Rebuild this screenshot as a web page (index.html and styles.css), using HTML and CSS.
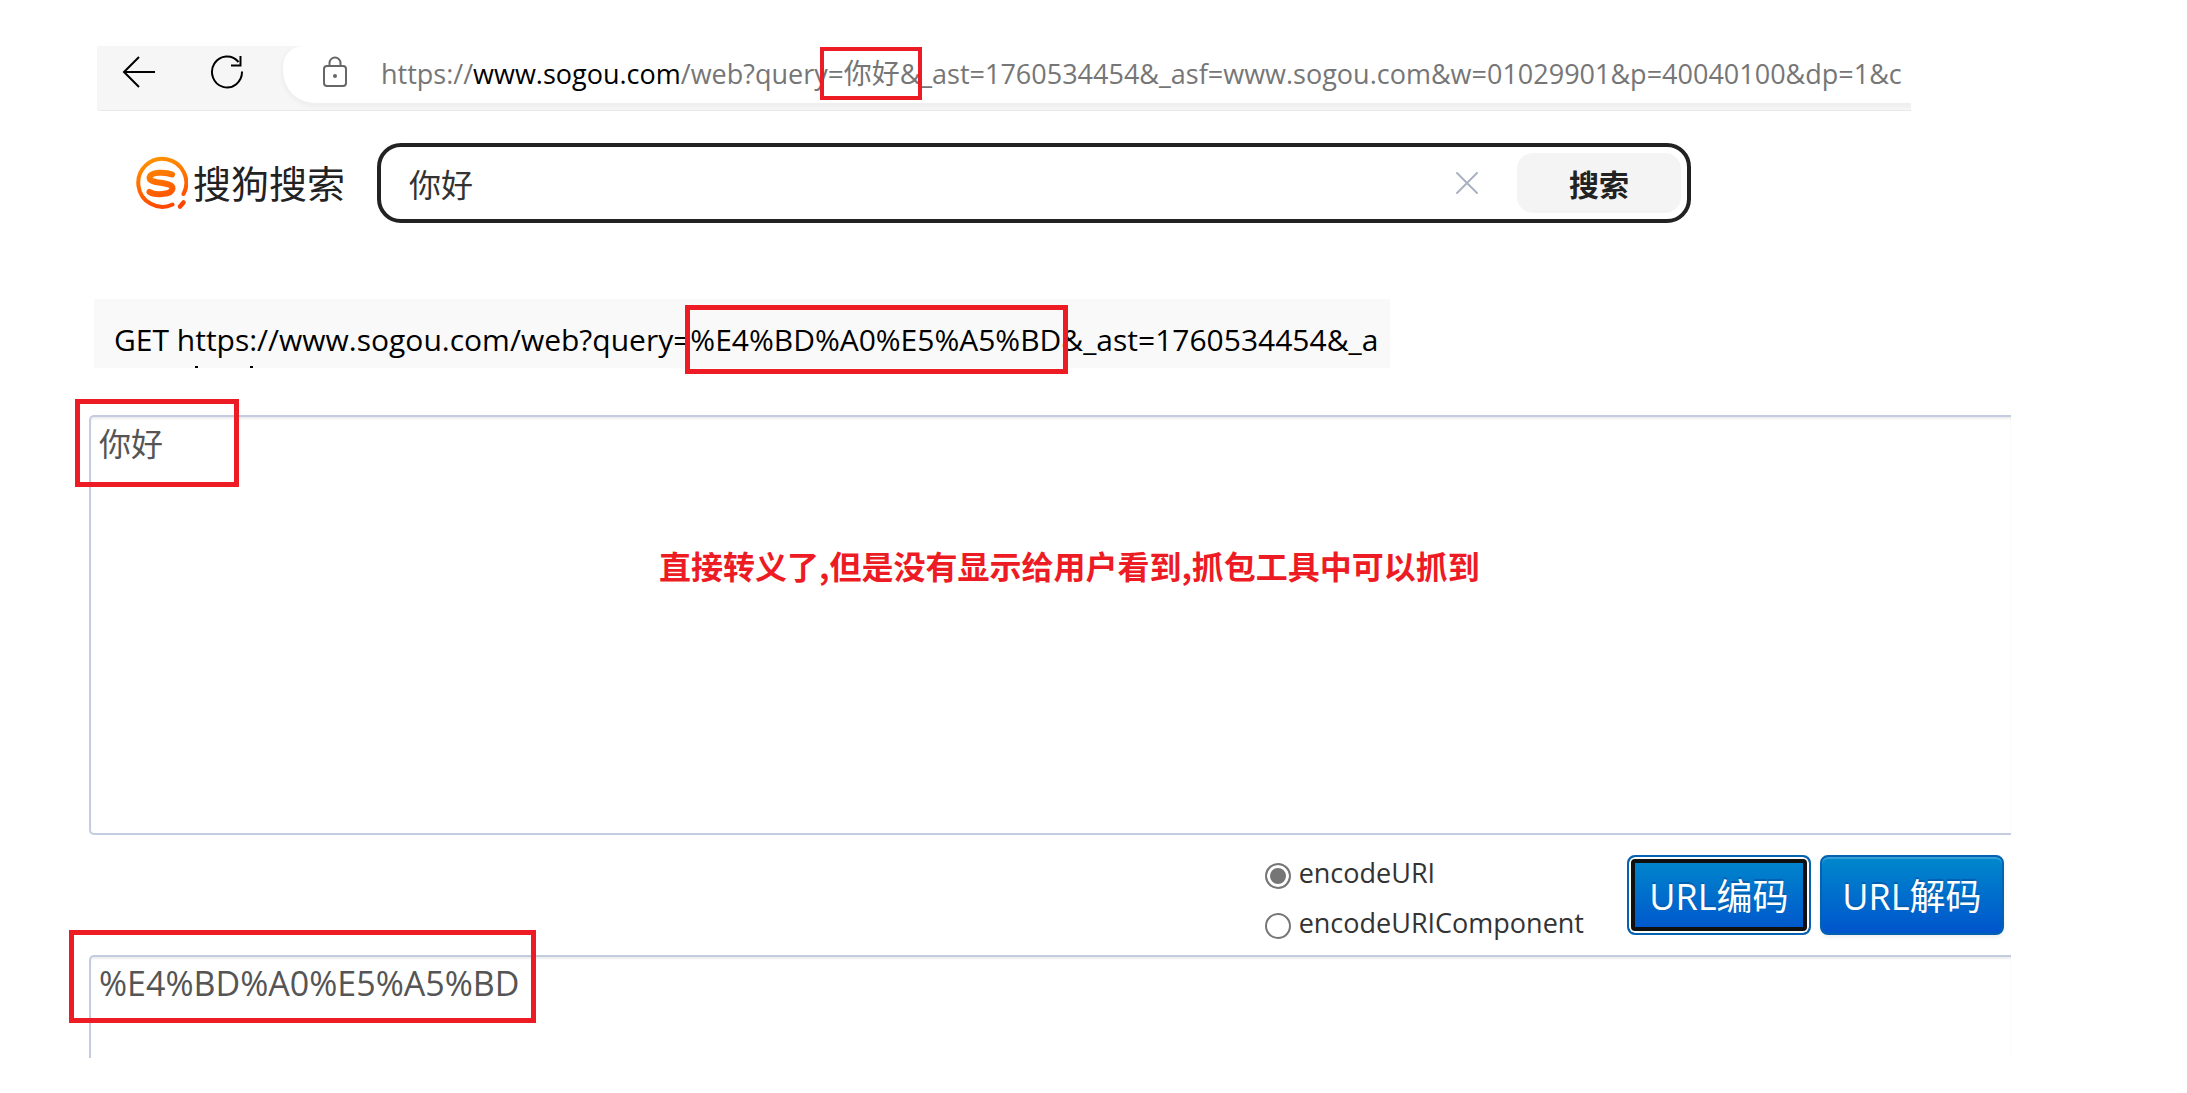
FILE: index.html
```
<!DOCTYPE html>
<html lang="zh-CN">
<head>
    <meta charset="UTF-8">
    <meta name="viewport" content="width=device-width, initial-scale=1.0">
    <title>URL编码</title>
    <link rel="stylesheet" href="styles.css">
</head>
<body>
    <!-- Browser toolbar -->
    <div class="toolbar">
        <div class="nav-buttons">
            <button type="button" class="icon-btn" aria-label="返回">
                <svg width="34" height="34" viewBox="0 0 34 34" fill="none" stroke="#000" stroke-width="2">
                    <path d="M33 17H2M17 2L2 17l15 15"/>
                </svg>
            </button>
            <button type="button" class="icon-btn" aria-label="刷新">
                <svg width="34" height="34" viewBox="0 0 34 34" fill="none" stroke="#000" stroke-width="2">
                    <path d="M32 16.5a15 15.500 0 1 1-3.500-9.500M30.500 1v9.500H21"/>
                </svg>
            </button>
        </div>
        <div class="address">
            <svg class="lock" width="26" height="32" viewBox="0 0 26 32" fill="none" stroke="#666" stroke-width="2">
                <rect x="2" y="10" width="22" height="20" rx="3"/>
                <path d="M7.500 10V7a5.500 5.500 0 0 1 11 0v3"/>
                <circle cx="13" cy="20" r="2" fill="#666" stroke="none"/>
            </svg>
            <div class="url">https://<span class="host">www.sogou.com</span>/web?query<span class="mark mark-url">=你好&amp;</span>_ast=1760534454&amp;_asf=www.sogou.com&amp;w=01029901&amp;p=40040100&amp;dp=1&amp;c</div>
        </div>
    </div>

    <!-- Search bar -->
    <div class="search">
        <a href="#" class="logo">
            <svg width="54" height="54" viewBox="0 0 54 54" fill="none" stroke="url(#flame)" stroke-linecap="round">
                <defs>
                    <linearGradient id="flame" gradientUnits="userSpaceOnUse" x1="20" y1="0" x2="34" y2="54">
                        <stop offset="0" stop-color="#ff9500"/>
                        <stop offset="1" stop-color="#ff4200"/>
                    </linearGradient>
                </defs>
                <path stroke-width="4" d="M38.500 48.500A24 24 0 1 1 49.500 38"/>
                <path stroke-width="4.500" d="M46 50.500l3.500-4"/>
                <path stroke-width="6" d="M38 18.500C32 16 16.500 15.500 15.500 21.500C15 28.500 39 25 38.500 32.500C37.500 39.500 20 39 15.500 36"/>
            </svg>
            <span>搜狗搜索</span>
        </a>
        <form class="search-form">
            <input type="text" value="你好" aria-label="搜索内容">
            <button type="button" class="clear-btn" aria-label="清除">
                <svg width="24" height="24" viewBox="0 0 24 24" fill="none" stroke="#aab2c2" stroke-width="2" stroke-linecap="round">
                    <path d="M2 2l20 20M22 2L2 22"/>
                </svg>
            </button>
            <button type="submit" class="search-btn">搜索</button>
        </form>
    </div>

    <!-- Captured request -->
    <div class="request">
        <div class="request-line">GET https://www.sogou.com/web?query=<span class="mark mark-request">%E4%BD%A0%E5%A5%BD</span>&amp;_ast=1760534454&amp;_a</div>
        <svg class="next-line" width="58" height="2" viewBox="0 0 58 2" fill="#000">
            <path d="M0 0h3v2H0zM55 0h3v2h-3z"/>
        </svg>
    </div>

    <!-- URL encode / decode tool -->
    <div class="tool">
        <div class="field">
            <textarea rows="9" aria-label="输入">你好</textarea>
            <div class="box box-input"></div>
            <p class="note">直接转义了,但是没有显示给用户看到,抓包工具中可以抓到</p>
        </div>
        <div class="controls">
            <div class="radios">
                <label><input type="radio" name="mode" checked><span>encodeURI</span></label>
                <label><input type="radio" name="mode"><span>encodeURIComponent</span></label>
            </div>
            <button type="button" class="btn active">URL编码</button>
            <button type="button" class="btn">URL解码</button>
        </div>
        <div class="field">
            <textarea class="output" rows="2" aria-label="输出">%E4%BD%A0%E5%A5%BD</textarea>
            <div class="box box-output"></div>
        </div>
    </div>
</body>
</html>
```
FILE: styles.css
```
* {
    box-sizing: border-box;
}
body {
    margin: 0;
    padding-top: 46px;
    background: #fff;
    color: #000;
    font-family: "Open Sans", "Noto Sans CJK SC", sans-serif;
}
button, input, textarea {
    font-family: inherit;
}

/* Browser toolbar */
.toolbar {
    display: flex;
    height: 65px;
    margin: 0 276px 0 97px;
    background: #f6f6f6;
    border-bottom: 1px solid #e8e8e8;
    border-bottom-left-radius: 4px;
    overflow: hidden;
}
.nav-buttons {
    display: flex;
    flex: none;
    gap: 54px;
    padding: 9px 39px 0 25px;
}
.icon-btn, .clear-btn {
    padding: 0;
    border: none;
    background: none;
    line-height: 0;
    cursor: pointer;
}
.icon-btn {
    height: 34px;
}
.address {
    display: flex;
    flex: 1;
    min-width: 0;
    height: 57px;
    padding-left: 39px;
    background: #fff;
    border-radius: 20px 0 0 32px;
    box-shadow: 0 2px 3px 2px #efefef;
}
.lock {
    flex: none;
    margin: 10px 33px 0 0;
}
.url {
    color: #767676;
    font-size: 27px;
    line-height: 54px;
    white-space: nowrap;
}
.host {
    color: #000;
}

/* Red frames */
.mark {
    position: relative;
}
.mark::after, .box {
    content: "";
    position: absolute;
    border: 5px solid #ed1c24;
    pointer-events: none;
}
.mark-url {
    font-size: 28px;
}
.mark-url::after {
    inset: -7px -2px -8px -8px;
    border-width: 4px;
}
.mark-request::after {
    inset: -14px -7px -14px -5px;
}

/* Search bar */
.search {
    display: flex;
    align-items: center;
    gap: 32px;
    margin: 32px 496px 0 134px;
}
.logo {
    display: flex;
    flex: none;
    align-items: center;
    gap: 5px;
    color: #222;
    font-size: 38px;
    line-height: 54px;
    text-decoration: none;
}
.search-form {
    display: flex;
    flex: 1;
    align-items: center;
    height: 80px;
    padding: 6px;
    border: 4px solid #222;
    border-radius: 24px;
}
.search-form input {
    flex: 1;
    min-width: 0;
    padding: 0 0 0 22px;
    border: none;
    outline: none;
    color: #333;
    font-size: 32px;
}
.clear-btn {
    margin-right: 38px;
}
.search-btn {
    width: 164px;
    height: 60px;
    border: none;
    border-radius: 16px;
    background: #f4f4f4;
    color: #222;
    font-size: 30px;
    font-weight: bold;
}

/* Captured request */
.request {
    height: 69px;
    margin: 76px 797px 0 94px;
    padding-left: 20px;
    background: #f9f9f9;
}
.request-line {
    height: 67px;
    padding-top: 20px;
    font-size: 30px;
    line-height: 42px;
    white-space: nowrap;
}
.next-line {
    display: block;
    margin-left: 81px;
}

/* URL tool */
.tool {
    margin: 47px 176px 0 89px;
}
.field {
    position: relative;
}
textarea {
    display: block;
    width: 100%;
    padding: 4px 8px 7px;
    border: 2px solid #c3cddf;
    border-right: none;
    border-radius: 5px 0 0 5px;
    outline: none;
    box-shadow: inset 0 2px 2px #eee;
    color: #555;
    font-size: 32px;
    line-height: 45px;
    resize: none;
    overflow: hidden;
}
.output {
    border-bottom: none;
    border-radius: 5px 0 0 0;
    font-size: 34px;
}
.box-input {
    top: -16px;
    left: -14px;
    width: 164px;
    height: 88px;
}
.box-output {
    top: -25px;
    left: -20px;
    width: 467px;
    height: 93px;
}
.note {
    position: absolute;
    top: 126px;
    left: 570px;
    margin: 0;
    color: #ed1c24;
    font-family: "Noto Sans CJK SC", sans-serif;
    font-size: 32px;
    font-weight: bold;
    line-height: 48px;
    white-space: nowrap;
}
.controls {
    display: flex;
    justify-content: flex-end;
    gap: 9px;
    height: 120px;
    padding: 16px 7px 0 0;
}
.radios {
    margin-right: 34px;
    color: #333;
    font-size: 27px;
    line-height: 44px;
}
.radios label {
    display: flex;
    align-items: center;
    gap: 8px;
    height: 50px;
}
.radios span {
    padding-bottom: 6px;
}
.radios input {
    width: 26px;
    height: 26px;
    margin: 0;
    border: 2px solid #767676;
    border-radius: 50%;
    appearance: none;
}
.radios input:checked {
    background: #767676;
    box-shadow: inset 0 0 0 3px #fff;
}
.btn {
    width: 184px;
    height: 80px;
    margin-top: 4px;
    padding: 0 0 2px;
    border: 2px solid #0462b0;
    border-radius: 8px;
    background: linear-gradient(#0088cc, #0055cc);
    box-shadow: inset 0 2px 0 #339fd6, 0 2px 4px #eee;
    color: #fff;
    font-size: 36px;
    text-shadow: 0 -2px 0 #0060b0;
    white-space: nowrap;
    cursor: pointer;
}
.btn.active {
    box-shadow: inset 0 0 0 2px #fff, inset 0 0 0 6px #101010;
}
```
